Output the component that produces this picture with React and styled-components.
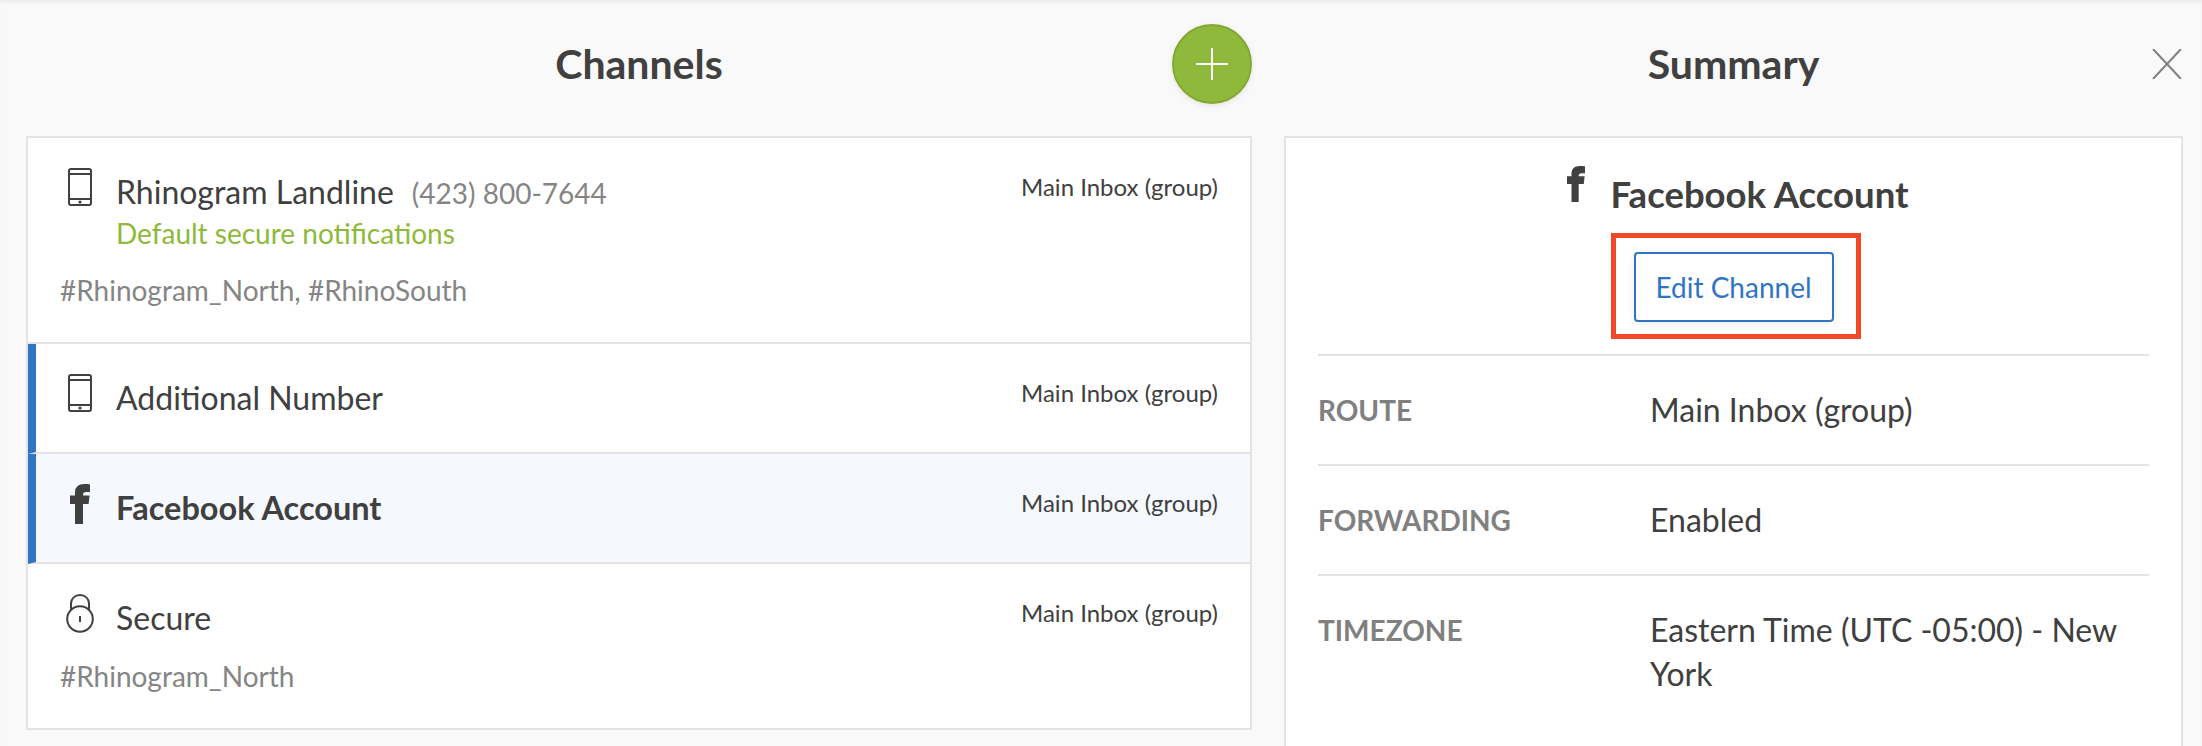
import styled, { createGlobalStyle } from "styled-components";

const channels = [
  {
    id: 1,
    icon: "phone",
    name: "Rhinogram Landline",
    number: "(423) 800-7644",
    note: "Default secure notifications",
    tags: "#Rhinogram_North, #RhinoSouth",
  },
  { id: 2, icon: "phone", name: "Additional Number", accent: true },
  { id: 3, icon: "facebook", name: "Facebook Account", accent: true, active: true },
  { id: 4, icon: "lock", name: "Secure", tags: "#Rhinogram_North" },
];

const summary = [
  { label: "ROUTE", value: "Main Inbox (group)" },
  { label: "FORWARDING", value: "Enabled" },
  { label: "TIMEZONE", value: "Eastern Time (UTC -05:00) - New York" },
];

const PhoneIcon = () => (
  <svg width="24" height="38" viewBox="0 0 24 38" fill="none" stroke="#404040" strokeWidth="2">
    <rect x="1" y="1" width="22" height="36" rx="2" />
    <path d="M1 6h22M1 31h22" />
    <circle cx="12" cy="34" r="1.6" fill="#404040" stroke="none" />
  </svg>
);

const FacebookIcon = ({ size = 40 }) => (
  <svg width={size / 2} height={size} viewBox="0 0 20 40" fill="#404040">
    <path d="M5 40V20H0v-8.5h5V8.5C5 3 8.6 0 14 0c2.6 0 4.6.2 6 .4V8h-3.6c-2.6 0-3.4 1-3.4 3v.5h6.6l-1 8.5H13v20z" />
  </svg>
);

const LockIcon = () => (
  <svg width="28" height="39" viewBox="0 0 28 39" fill="none" stroke="#404040" strokeWidth="2">
    <circle cx="14" cy="25" r="12.8" />
    <path d="M5 16V9.5C5 4.5 9 1 14 1s9 3.5 9 8.5V16" />
    <path d="M14 22v6" />
  </svg>
);

const icons = {
  phone: <PhoneIcon />,
  facebook: <FacebookIcon />,
  lock: <LockIcon />,
};

export default function App() {
  return (
    <>
      <GlobalStyle />
      <Page>
        <Column>
          <Header>
            <span />
            <Title>Channels</Title>
            <AddButton aria-label="Add channel">
              <svg width="32" height="32" viewBox="0 0 32 32" stroke="#fff" strokeWidth="2">
                <path d="M16 0v32M0 16h32" />
              </svg>
            </AddButton>
          </Header>
          <Panel>
            {channels.map(channel => (
              <Row key={channel.id} $accent={channel.accent} $active={channel.active}>
                <RowMain>
                  <IconBox>{icons[channel.icon]}</IconBox>
                  <RowText>
                    <NameLine>
                      <Name $active={channel.active}>{channel.name}</Name>
                      {channel.number && <Number>{channel.number}</Number>}
                    </NameLine>
                    {channel.note && <Note>{channel.note}</Note>}
                  </RowText>
                  <Route>Main Inbox (group)</Route>
                </RowMain>
                {channel.tags && <Tags>{channel.tags}</Tags>}
              </Row>
            ))}
          </Panel>
        </Column>

        <Column>
          <Header>
            <span />
            <Title>Summary</Title>
            <CloseButton aria-label="Close">
              <svg width="30" height="30" viewBox="0 0 30 30" stroke="#7f7f7f" strokeWidth="2">
                <path d="M1 0l28 30M29 0L1 30" />
              </svg>
            </CloseButton>
          </Header>
          <SummaryPanel>
            <SummaryHead>
              <HeadLine>
                <HeadIcon>
                  <FacebookIcon size={36} />
                </HeadIcon>
                <HeadName>Facebook Account</HeadName>
              </HeadLine>
              <EditButton>Edit Channel</EditButton>
            </SummaryHead>
            {summary.map(item => (
              <SummaryRow key={item.label}>
                <Label>{item.label}</Label>
                <Value>{item.value}</Value>
              </SummaryRow>
            ))}
          </SummaryPanel>
        </Column>
      </Page>
    </>
  );
}

const GlobalStyle = createGlobalStyle`
  html, body {
    margin: 0;
    padding: 0;
    background: #f9f9f9;
  }
  body {
    font-family: Lato, "Open Sans", sans-serif;
    color: #404040;
  }
`;

const Page = styled.div`
  display: grid;
  grid-template-columns: 1226px 899px;
  column-gap: 32px;
  box-sizing: border-box;
  height: 746px;
  padding: 0 19px 0 26px;
  overflow: hidden;
  box-shadow: inset 0 3px 3px -1px rgba(0, 0, 0, 0.06);
`;

const Column = styled.div`
  min-width: 0;
`;

const Header = styled.div`
  display: grid;
  grid-template-columns: 1fr auto 1fr;
  align-items: center;
  height: 128px;
  margin-bottom: 8px;
`;

const Title = styled.h2`
  margin: 0;
  font-size: 41px;
  font-weight: 700;
  line-height: 48px;
  color: #404040;
`;

const AddButton = styled.button`
  justify-self: end;
  display: flex;
  align-items: center;
  justify-content: center;
  box-sizing: border-box;
  width: 80px;
  height: 80px;
  padding: 0;
  background: #8fb93a;
  border: 2px solid #84a834;
  border-radius: 50%;
  box-shadow: 0 2px 6px rgba(0, 0, 0, 0.08);
`;

const CloseButton = styled.button`
  justify-self: end;
  display: flex;
  margin-right: 1px;
  padding: 0;
  background: none;
  border: 0;
`;

const Panel = styled.div`
  background: #fff;
  border: 2px solid #e3e3e3;
`;

const Row = styled.div`
  box-sizing: content-box;
  min-height: 76px;
  padding: 32px 32px 0 ${props => (props.$accent ? "24px" : "32px")};
  background: ${props => (props.$active ? "#f5f9fe" : "#fff")};
  border-left: ${props => (props.$accent ? "8px solid #3074c4" : "0")};
  border-bottom: 2px solid #e3e3e3;

  &:last-child {
    border-bottom: 0;
  }
`;

const RowMain = styled.div`
  display: flex;
  align-items: flex-start;
`;

const IconBox = styled.div`
  display: flex;
  justify-content: center;
  flex: none;
  width: 40px;
  height: 40px;
  margin: -2px 16px 0 0;
`;

const RowText = styled.div`
  flex: 1;
`;

const NameLine = styled.div`
  display: flex;
  align-items: baseline;
  gap: 18px;
  height: 44px;
  line-height: 44px;
`;

const Name = styled.span`
  font-size: ${props => (props.$active ? "32.5px" : "32px")};
  font-weight: ${props => (props.$active ? 700 : 400)};
`;

const Number = styled.span`
  font-size: 28px;
  color: #858585;
`;

const Note = styled.div`
  margin-bottom: 1px;
  font-size: 28px;
  line-height: 39px;
  color: #8fb93a;
`;

const Route = styled.div`
  flex: none;
  margin-top: -5px;
  font-size: 24px;
  line-height: 44px;
  color: #404040;
`;

const Tags = styled.div`
  margin: 16px 0 32px;
  font-size: 28px;
  line-height: 40px;
  color: #858585;
`;

const SummaryPanel = styled.div`
  box-sizing: border-box;
  height: 700px;
  padding: 0 32px;
  background: #fff;
  border: 2px solid #e3e3e3;
`;

const SummaryHead = styled.div`
  display: flex;
  flex-direction: column;
  align-items: center;
  box-sizing: border-box;
  height: 216px;
  padding-top: 28px;
`;

const HeadLine = styled.div`
  display: flex;
  align-items: flex-start;
  gap: 25px;
  height: 86px;
  margin-left: 9px;
`;

const HeadIcon = styled.div`
  display: flex;
`;

const HeadName = styled.div`
  margin-top: 4px;
  font-size: 36.5px;
  font-weight: 700;
  line-height: 48px;
`;

const EditButton = styled.button`
  position: relative;
  box-sizing: border-box;
  width: 200px;
  height: 70px;
  padding: 0;
  font-family: inherit;
  font-size: 28px;
  color: #3074c4;
  background: #fff;
  border: 2px solid #3074c4;
  border-radius: 4px;
  box-shadow: 0 2px 8px rgba(0, 0, 0, 0.08);

  &::after {
    content: "";
    position: absolute;
    top: -21px;
    right: -29px;
    bottom: -19px;
    left: -25px;
    border: 5px solid #f04a28;
  }
`;

const SummaryRow = styled.div`
  display: grid;
  grid-template-columns: 332px 1fr;
  box-sizing: border-box;
  min-height: 110px;
  padding: 32px 0;
  border-top: 2px solid #e3e3e3;
`;

const Label = styled.div`
  font-size: 28px;
  font-weight: 700;
  line-height: 44px;
  color: #808080;
`;

const Value = styled.div`
  font-size: 32px;
  line-height: 44px;
  color: #404040;
`;
